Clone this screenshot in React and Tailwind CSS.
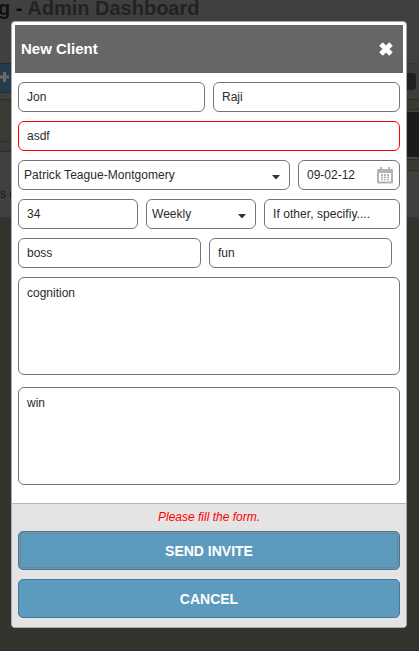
const font = "font-['Liberation_Sans',Arial,sans-serif]";
const field =
  "h-[30px] rounded-[6px] border border-[#757575] bg-white text-[12px] text-[#2a2a2a] outline-none";

function Input({ className = "", value }) {
  return <input readOnly value={value} className={`${field} px-2 ${className}`} />;
}

function Select({ className = "", value }) {
  return (
    <div className={`${field} flex items-center justify-between pl-[5px] pr-[9px] ${className}`}>
      <span className="whitespace-nowrap tracking-[0.04px]">{value}</span>
      <svg width="8" height="4" viewBox="0 0 8 4" className="mt-[3px]" fill="#333">
        <path d="M0 0h8L4.500 4h-1z" />
      </svg>
    </div>
  );
}

function CalendarIcon() {
  return (
    <svg width="16" height="17" viewBox="0 0 16 17" className="mt-px" fill="#b3b3b3">
      <path
        fillRule="evenodd"
        d="M1 2h2V0h2v2h6V0h2v2h2q1 0 1 1v12q0 1.500-1.500 1.500h-13Q0 16.500 0 15V3q0-1 1-1zM2 6v8.500h12V6z"
      />
      <path d="M4 7h2v2H4zM7 7h2v2H7zM10 7h2v2h-2zM4 9.500h2v1.500H4zM7 9.500h2v1.500H7zM10 9.500h2v1.500h-2zM4 11.700h2v1.500H4zM7 11.700h2v1.500H7zM10 11.700h2v1.500h-2z" />
    </svg>
  );
}

function Backdrop() {
  return (
    <div className="flex h-[651px] w-[419px] flex-col overflow-hidden bg-[#34342e]">
      <div className="h-[63px] shrink-0 bg-[#404040]">
        <h1 className="-ml-[2px] whitespace-nowrap text-[20px] font-bold leading-4 text-[#222]">
          <span className="text-[#101010]">g - </span>Admin Dashboard
        </h1>
      </div>
      <div className="flex flex-1 justify-between">
        <div className="w-[11px]">
          <div className="flex h-[30px] items-center border-y border-[#1b2d38] bg-[#243c4b]">
            <svg width="9" height="10" viewBox="0 0 9 10" className="-mt-[2px]" fill="#6b6b6b">
              <path d="M3 0h3v3.500h3v3H6V10H3V6.500H0v-3h3z" />
            </svg>
          </div>
          <div className="h-[6px] bg-[#404040]" />
          <div className="h-[42px] border-t border-[#2f2f2d] bg-[#3c3a35]" />
          <div className="h-[11px] border-y border-[#2d2d30] bg-[#3b3a34]" />
          <div className="h-[65px] bg-[#404040] pt-[34px] text-[12px] leading-4 whitespace-nowrap text-[#181818]">
            s r
          </div>
        </div>
        <div className="w-[12px]">
          <div className="h-[36px] border-t border-[#373737] bg-[#3e3c3b] pt-[9px]">
            <div className="h-[17px] w-[9px] rounded-r-[3px] bg-[#202020]" />
          </div>
          <div className="h-[11px] border-y border-[#2b2b2a] bg-[#3a3a33]" />
          <div className="h-[2px] bg-[#404040]" />
          <div className="h-[45px] bg-[#1b1b1b]" />
          <div className="h-[2px] bg-[#444]" />
          <div className="h-[12px] border-y border-[#2b2b2a] bg-[#3a3a33]" />
          <div className="h-[46px] bg-[#404040]" />
        </div>
      </div>
      <div className="h-px bg-[#2b2b29]" />
    </div>
  );
}

export default function App() {
  return (
    <div className={`relative h-[651px] w-[419px] overflow-hidden ${font}`}>
      <Backdrop />
      <section className="absolute left-[11px] top-[21px] flex h-[607px] w-[396px] flex-col overflow-hidden rounded-[4px] border border-[#aaa] bg-white">
        <header className="mx-[3px] mt-[3px] flex h-12 items-center justify-between bg-[#666] pl-[6px] pr-[10px]">
          <h2 className="text-[15px] font-bold text-white">New Client</h2>
          <svg width="14" height="14" viewBox="0 0 14 14" fill="none" stroke="#fff" strokeWidth="5">
            <path d="M2 2l10 10M12 2L2 12" />
          </svg>
        </header>
        <div className="flex flex-1 flex-col gap-[9px] px-[6px] pt-[9px]">
          <div className="flex gap-2">
            <Input value="Jon" className="w-[187px]" />
            <Input value="Raji" className="w-[187px]" />
          </div>
          <Input value="asdf" className="w-[382px] border-[#f00]!" />
          <div className="flex gap-2">
            <Select value="Patrick Teague-Montgomery" className="w-[272px]" />
            <div className={`${field} flex w-[102px] items-center justify-between pl-2 pr-[6px]`}>
              <span>09-02-12</span>
              <CalendarIcon />
            </div>
          </div>
          <div className="flex gap-2">
            <Input value="34" className="w-[120px]" />
            <Select value="Weekly" className="w-[110px]" />
            <Input value="If other, specifiy...." className="w-[136px] tracking-[0.06px]" />
          </div>
          <div className="flex gap-2">
            <Input value="boss" className="w-[183px]" />
            <Input value="fun" className="w-[183px]" />
          </div>
          <div className="flex flex-col gap-3">
            <textarea readOnly value="cognition" className={`${field} h-[98px]! w-[382px] resize-none px-2 py-[7px] leading-4`} />
            <textarea readOnly value="win" className={`${field} h-[98px]! w-[382px] resize-none px-2 py-[7px] leading-4`} />
          </div>
        </div>
        <footer className="h-[124px] border-t border-[#b5b5b5] bg-[#e4e4e4] px-[6px]">
          <p className="pt-[5px] text-center text-[12px] italic leading-[17px] text-[#f00]">Please fill the form.</p>
          <button className="mt-[5px] block h-[39px] w-full rounded-[5px] border border-[#44799a] bg-[#5c9bbd] p-px text-[14px] font-bold text-white">
            <span className="flex h-full items-center justify-center rounded-[2px] border border-dotted border-[#a5685a] pt-[2px]">
              SEND INVITE
            </span>
          </button>
          <button className="mt-[9px] block h-[39px] w-full rounded-[5px] border border-[#44799a] bg-[#5c9bbd] pt-[2px] text-[14px] font-bold text-white">
            CANCEL
          </button>
        </footer>
      </section>
    </div>
  );
}
